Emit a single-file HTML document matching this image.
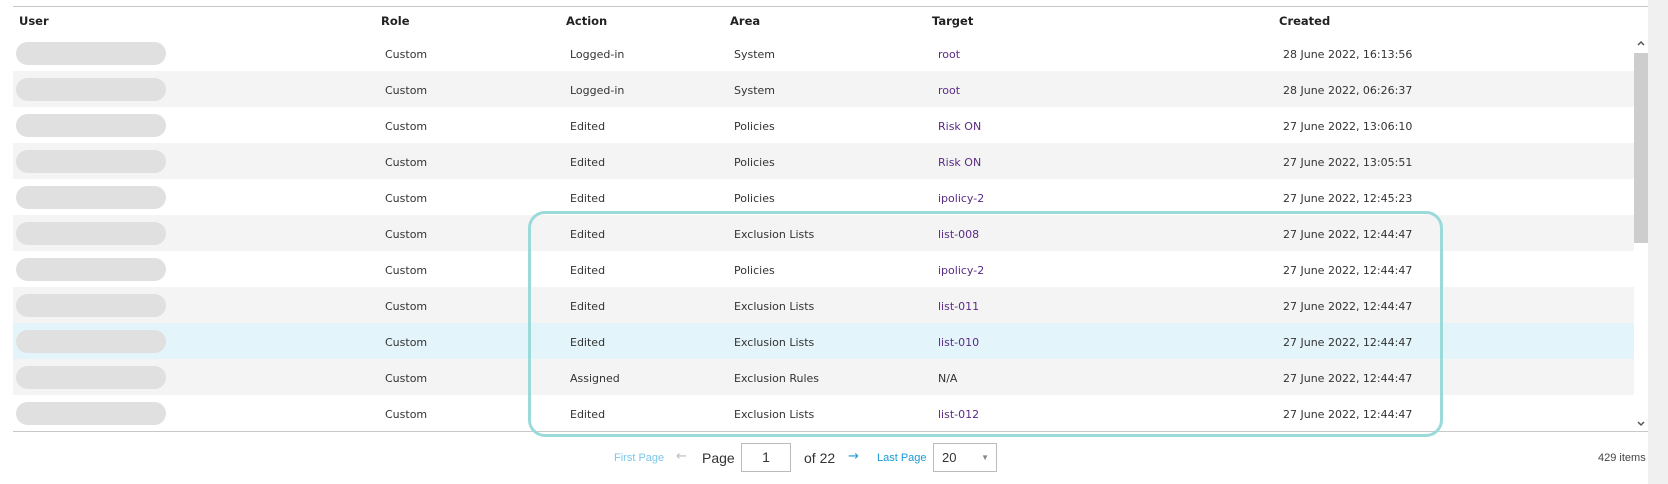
<!DOCTYPE html>
<html><head><style>
body{margin:0;width:1668px;height:484px;background:#fff;position:relative;overflow:hidden;font-family:"DejaVu Sans","Liberation Sans",sans-serif;font-size:11px;color:#333}
.abs{position:absolute}
.hdr{position:absolute;top:6px;left:13px;width:1635px;height:28px;border-top:1px solid #c8c8c8;border-bottom:1px solid #c8c8c8}
.hdr span{position:absolute;top:7px;font-weight:bold;font-size:11.5px;color:#222}
.row{position:absolute;left:13px;width:1621px;height:36px}
.row span{position:absolute;top:13px;white-space:nowrap}
.pill{position:absolute;left:3px;top:7px;width:150px;height:23px;border-radius:12px;background:#e0e0e0}
.t{color:#5b2a86}
</style></head><body>
<div class="hdr">
<span style="left:6px">User</span><span style="left:368px">Role</span><span style="left:553px">Action</span><span style="left:717px">Area</span><span style="left:919px">Target</span><span style="left:1266px">Created</span>
</div>
<div class="row" style="top:35px;background:#fff"><div class="pill"></div><span style="left:372px">Custom</span><span style="left:557px">Logged-in</span><span style="left:721px">System</span><span class="t" style="left:925px">root</span><span style="left:1270px">28 June 2022, 16:13:56</span></div>
<div class="row" style="top:71px;background:#f4f4f4"><div class="pill"></div><span style="left:372px">Custom</span><span style="left:557px">Logged-in</span><span style="left:721px">System</span><span class="t" style="left:925px">root</span><span style="left:1270px">28 June 2022, 06:26:37</span></div>
<div class="row" style="top:107px;background:#fff"><div class="pill"></div><span style="left:372px">Custom</span><span style="left:557px">Edited</span><span style="left:721px">Policies</span><span class="t" style="left:925px">Risk ON</span><span style="left:1270px">27 June 2022, 13:06:10</span></div>
<div class="row" style="top:143px;background:#f4f4f4"><div class="pill"></div><span style="left:372px">Custom</span><span style="left:557px">Edited</span><span style="left:721px">Policies</span><span class="t" style="left:925px">Risk ON</span><span style="left:1270px">27 June 2022, 13:05:51</span></div>
<div class="row" style="top:179px;background:#fff"><div class="pill"></div><span style="left:372px">Custom</span><span style="left:557px">Edited</span><span style="left:721px">Policies</span><span class="t" style="left:925px">ipolicy-2</span><span style="left:1270px">27 June 2022, 12:45:23</span></div>
<div class="row" style="top:215px;background:#f4f4f4"><div class="pill"></div><span style="left:372px">Custom</span><span style="left:557px">Edited</span><span style="left:721px">Exclusion Lists</span><span class="t" style="left:925px">list-008</span><span style="left:1270px">27 June 2022, 12:44:47</span></div>
<div class="row" style="top:251px;background:#fff"><div class="pill"></div><span style="left:372px">Custom</span><span style="left:557px">Edited</span><span style="left:721px">Policies</span><span class="t" style="left:925px">ipolicy-2</span><span style="left:1270px">27 June 2022, 12:44:47</span></div>
<div class="row" style="top:287px;background:#f4f4f4"><div class="pill"></div><span style="left:372px">Custom</span><span style="left:557px">Edited</span><span style="left:721px">Exclusion Lists</span><span class="t" style="left:925px">list-011</span><span style="left:1270px">27 June 2022, 12:44:47</span></div>
<div class="row" style="top:323px;background:#e3f4fb"><div class="pill"></div><span style="left:372px">Custom</span><span style="left:557px">Edited</span><span style="left:721px">Exclusion Lists</span><span class="t" style="left:925px">list-010</span><span style="left:1270px">27 June 2022, 12:44:47</span></div>
<div class="row" style="top:359px;background:#f4f4f4"><div class="pill"></div><span style="left:372px">Custom</span><span style="left:557px">Assigned</span><span style="left:721px">Exclusion Rules</span><span style="left:925px">N/A</span><span style="left:1270px">27 June 2022, 12:44:47</span></div>
<div class="row" style="top:395px;background:#fff"><div class="pill"></div><span style="left:372px">Custom</span><span style="left:557px">Edited</span><span style="left:721px">Exclusion Lists</span><span class="t" style="left:925px">list-012</span><span style="left:1270px">27 June 2022, 12:44:47</span></div>
<div class="abs" style="left:13px;top:431px;width:1635px;height:1px;background:#c8c8c8"></div>
<div class="abs" style="left:1634px;top:35px;width:14px;height:396px;background:#fff"></div>
<div class="abs" style="left:1634px;top:53px;width:14px;height:190px;background:#cdcdcd"></div>
<svg class="abs" style="left:1636px;top:39px" width="10" height="8"><path d="M2 6 L5 3 L8 6" stroke="#555" stroke-width="1.5" fill="none"/></svg>
<svg class="abs" style="left:1636px;top:420px" width="10" height="8"><path d="M2 2 L5 5 L8 2" stroke="#555" stroke-width="1.5" fill="none"/></svg>
<div class="abs" style="left:1648px;top:0;width:20px;height:484px;background:#f0f0f0"></div>
<div class="abs" style="left:528px;top:211px;width:909px;height:220px;border:3px solid #9adbd9;border-radius:17px"></div>
<div class="abs" style="left:614px;top:452px;font-size:11px;color:#7cc7ea;font-family:'Liberation Sans',sans-serif">First Page</div>
<div class="abs" style="left:676px;top:449px;font-size:13px;color:#bbb">&#8592;</div>
<div class="abs" style="left:702px;top:450px;font-size:14px;color:#333;font-family:'Liberation Sans',sans-serif">Page</div>
<div class="abs" style="left:741px;top:443px;width:48px;height:27px;border:1px solid #bbb;font-size:14px;text-align:center;line-height:27px;font-family:'Liberation Sans',sans-serif">1</div>
<div class="abs" style="left:804px;top:450px;font-size:14px;color:#333;font-family:'Liberation Sans',sans-serif">of 22</div>
<div class="abs" style="left:848px;top:449px;font-size:13px;color:#1a9ad6">&#8594;</div>
<div class="abs" style="left:877px;top:452px;font-size:11px;color:#1a9ad6;font-family:'Liberation Sans',sans-serif">Last Page</div>
<div class="abs" style="left:933px;top:443px;width:54px;height:27px;border:1px solid #bbb;font-size:13px;line-height:27px;padding-left:8px;font-family:'Liberation Sans',sans-serif">20<span style="position:absolute;right:7px;font-size:8px;color:#888">&#9660;</span></div>
<div class="abs" style="left:1598px;top:452px;font-size:11px;color:#444;font-family:'Liberation Sans',sans-serif">429 items</div>
</body></html>
